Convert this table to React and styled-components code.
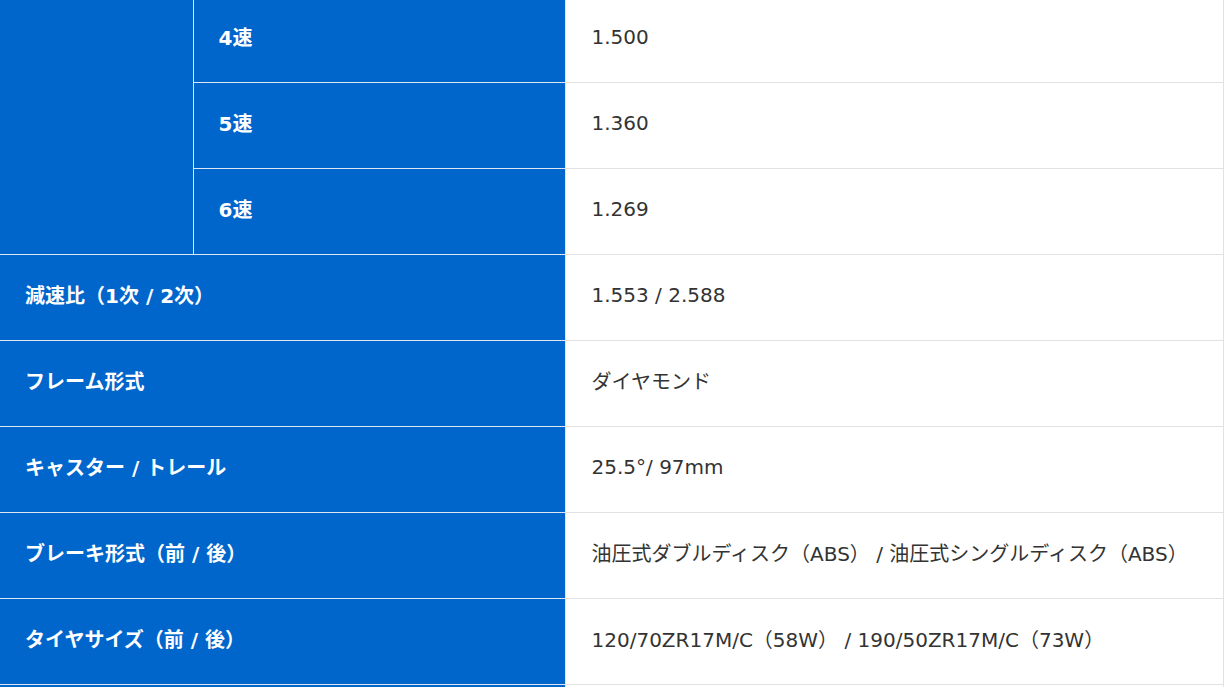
import React from "react";
import styled, { createGlobalStyle } from "styled-components";

const GlobalStyle = createGlobalStyle`
  html, body {
    margin: 0;
    padding: 0;
    background: #fff;
    overflow: hidden;
  }
  body {
    font-family: "DejaVu Sans", "Noto Sans CJK JP", sans-serif;
  }
`;

const Viewport = styled.div`
  height: 687px;
  overflow: hidden;
`;

const SpecTable = styled.table`
  width: 1224px;
  margin-top: -4px;
  border-collapse: collapse;
  table-layout: fixed;
  border-right: 1px solid #e2e2e2;
`;

const Head = styled.th`
  background-color: #0066cc;
  color: #fff;
  font-size: 20px;
  font-weight: bold;
  text-align: left;
  padding: 0 25px 6px;
  height: 86px;
  box-sizing: border-box;
  border: 1px solid #dde6f2;
  border-left: none;
  white-space: nowrap;
`;

const Value = styled.td`
  background-color: #fff;
  color: #333;
  font-size: 20px;
  padding: 0 26px 6px;
  height: 86px;
  box-sizing: border-box;
  border: 1px solid #e2e2e2;
  white-space: nowrap;
`;

const rows = [
  { sub: "4速", value: "1.500" },
  { sub: "5速", value: "1.360" },
  { sub: "6速", value: "1.269" },
];

const specs = [
  { label: "減速比（1次 / 2次）", value: "1.553 / 2.588" },
  { label: "フレーム形式", value: "ダイヤモンド" },
  { label: "キャスター / トレール", value: "25.5°/ 97mm" },
  { label: "ブレーキ形式（前 / 後）", value: "油圧式ダブルディスク（ABS） / 油圧式シングルディスク（ABS）" },
  { label: "タイヤサイズ（前 / 後）", value: "120/70ZR17M/C（58W） / 190/50ZR17M/C（73W）" },
];

export default function App() {
  return (
    <Viewport>
      <GlobalStyle />
      <SpecTable>
        <colgroup>
          <col style={{ width: 193 }} />
          <col style={{ width: 372 }} />
          <col />
        </colgroup>
        <tbody>
          {rows.map((r, i) => (
            <tr key={r.sub}>
              {i === 0 && <Head rowSpan={3} />}
              <Head>{r.sub}</Head>
              <Value>{r.value}</Value>
            </tr>
          ))}
          {specs.map((s) => (
            <tr key={s.label}>
              <Head colSpan={2}>{s.label}</Head>
              <Value>{s.value}</Value>
            </tr>
          ))}
          {/* next row, only its top edge shows in the frame */}
          <tr>
            <Head colSpan={2} />
            <Value />
          </tr>
        </tbody>
      </SpecTable>
    </Viewport>
  );
}
